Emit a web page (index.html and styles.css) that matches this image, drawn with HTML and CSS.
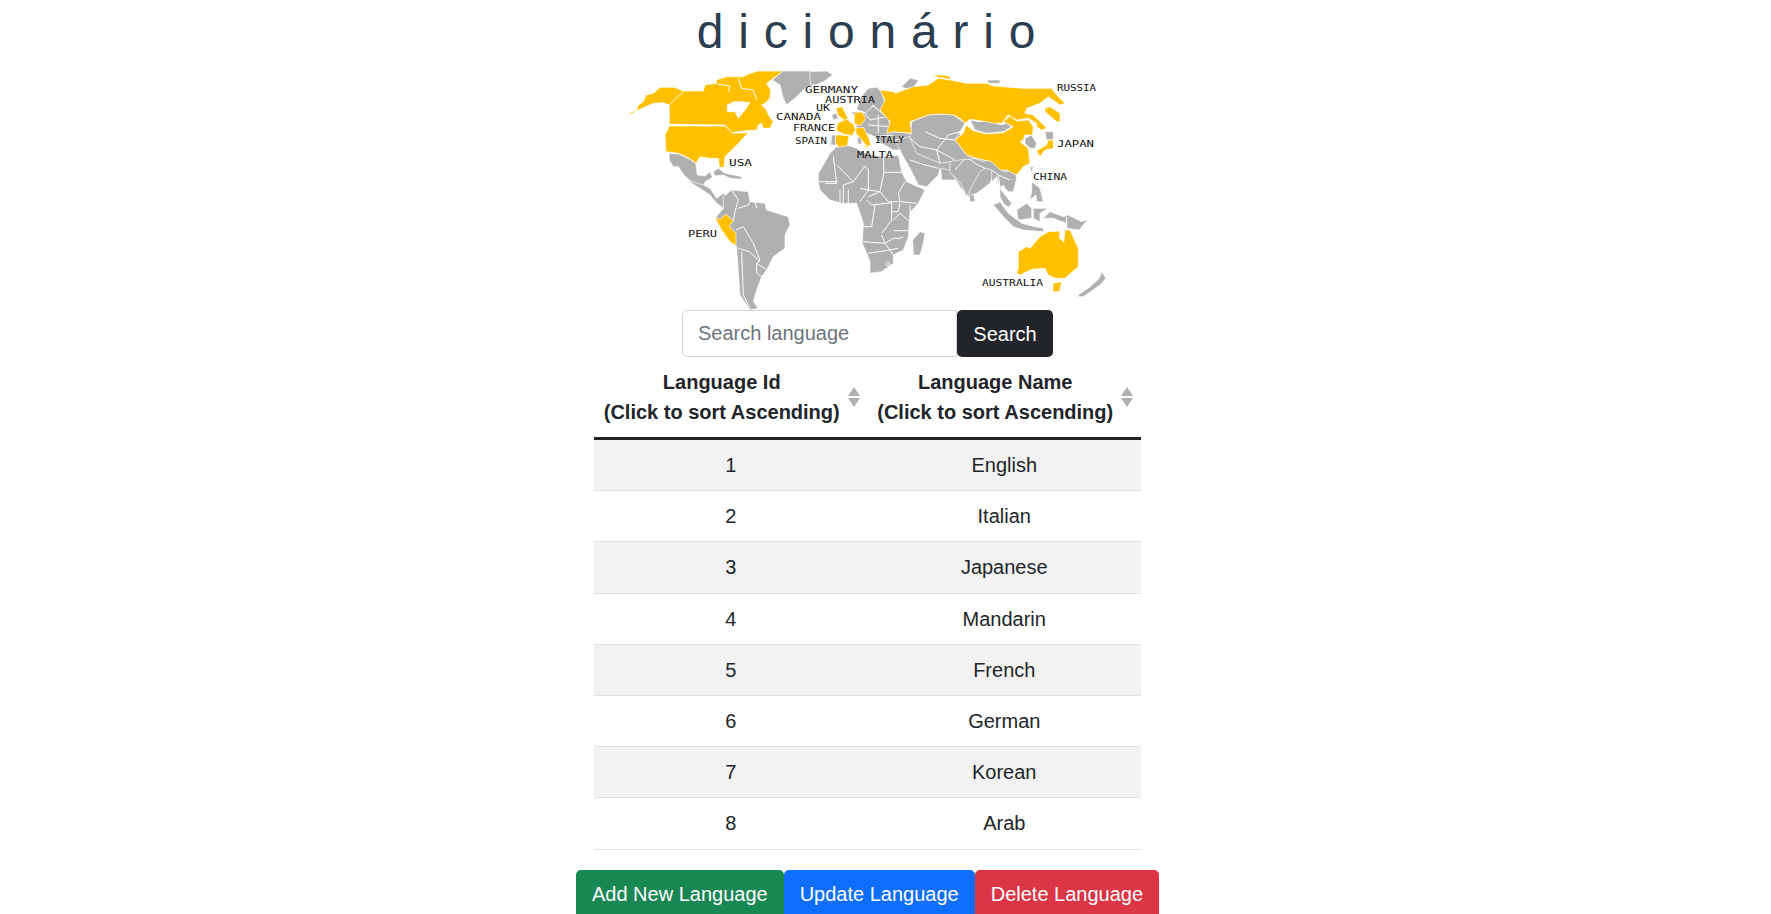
FILE: index.html
```html
<!DOCTYPE html>
<html>
<head>
    <meta charset="utf-8">
    <title>dicionário</title>
    <link rel="stylesheet" href="styles.css">
</head>
<body>
    <div id="container">
        <h1 class="title">dicionário</h1>

        <svg class="map" viewBox="618 60 500 250" width="500" height="250">
            <!-- north america -->
            <g transform="translate(610 60) scale(.3333)">
                <polygon class="land" points="487,60 520,33 640,33 668,42 650,60 620,75 590,80 560,110 530,135 520,115 510,75"/>
                <polygon class="land" points="178,280 205,282 240,298 258,312 262,345 285,348 300,335 308,352 285,365 278,385 290,400 262,378 240,362 222,345 205,320 190,320 178,300"/>
                <polygon class="land" points="310,335 325,325 345,340 395,350 395,358 360,355 340,345 315,348"/>
                <polygon class="hit" points="57,165 60,158 80,150 85,135 100,125 108,105 130,100 150,82 190,82 222,93 178,135 160,128 130,130 85,150"/>
                <path class="hit" fill-rule="evenodd" d="M222,93 L280,93 285,75 320,70 318,60 350,50 400,50 415,42 445,33 520,33 490,55 470,70 482,90 480,115 465,130 455,135 470,150 475,165 490,185 480,205 460,205 455,190 445,195 440,210 410,212 365,218 345,195 178,193 178,135 Z M352,135 L370,125 395,125 420,128 405,150 385,175 375,155 352,155 Z"/>
                <polygon class="hit" points="178,198 345,198 368,220 415,218 385,250 345,290 342,322 328,322 326,295 300,295 270,290 258,310 238,295 205,280 168,275 165,225"/>
                <polyline class="border" points="320,72 360,78 355,95"/>
                <polyline class="border" points="385,55 395,85 430,90 440,120"/>
            </g>
            <!-- south america -->
            <g transform="translate(660 180) scale(.3333)">
                <polygon class="land" points="80,0 130,15 150,25 170,55 190,40 205,55 190,85 170,70 150,45 120,25"/>
                <polygon class="land" points="190,50 215,30 265,35 270,65 315,70 320,90 385,110 390,135 375,165 375,205 340,230 320,270 305,290 290,330 280,365 295,385 270,390 240,345 230,200 185,150 165,115 190,85"/>
                <polygon class="hit" points="165,112 180,118 198,103 220,122 208,138 228,160 228,197 210,185 185,150"/>
                <polyline class="border" points="215,30 235,60 225,95 220,122"/>
                <polyline class="border" points="235,85 265,75 270,65"/>
                <polyline class="border" points="285,65 290,85"/>
                <polyline class="border" points="228,150 250,140 280,190 300,240 290,250 320,270"/>
                <polyline class="border" points="235,205 268,215 300,245"/>
                <polyline class="border" points="245,215 250,345 270,385"/>
                <polyline class="border" points="290,250 290,280 305,290"/>
            </g>
            <!-- africa -->
            <g transform="translate(810 140) scale(.3333)">
                <polygon class="land" points="25,100 40,75 60,40 80,20 110,15 140,25 165,40 220,50 265,45 275,95 290,125 345,150 325,190 302,215 298,245 295,290 280,330 250,345 250,370 215,395 180,400 180,365 170,340 157,310 160,250 145,205 140,190 95,190 60,180 30,150 25,125"/>
                <polygon class="land" points="310,345 308,300 330,275 345,280 340,310 330,345"/>
                <polyline class="border" points="70,50 80,130 45,130"/>
                <polyline class="border" points="25,125 80,125"/>
                <polyline class="border" points="80,75 130,125 165,78 175,90 175,150"/>
                <polyline class="border" points="220,50 222,97 275,97"/>
                <polyline class="border" points="222,97 210,155 175,150"/>
                <polyline class="border" points="210,155 235,185 270,185 265,160 285,125"/>
                <polyline class="border" points="270,185 320,190"/>
                <polyline class="border" points="175,170 210,155"/>
                <polyline class="border" points="170,180 185,195 245,188 245,240 215,280"/>
                <polyline class="border" points="195,195 185,260 160,260"/>
                <polyline class="border" points="245,215 265,215 270,190"/>
                <polyline class="border" points="300,195 300,245 270,220 250,240"/>
                <polyline class="border" points="250,272 295,272"/>
                <polyline class="border" points="215,285 225,310 160,305"/>
                <polyline class="border" points="225,310 250,295 270,295 280,290"/>
                <polyline class="border" points="225,310 240,330 265,325"/>
                <polyline class="border" points="175,340 240,330 250,345"/>
                <polyline class="border" points="130,125 100,135 100,190"/>
                <polyline class="border" points="90,150 90,190"/>
                <polyline class="border" points="115,150 115,190"/>
                <polyline class="border" points="150,145 175,150 150,185"/>
                <circle class="border" cx="233" cy="372" r="5"/>
            </g>
            <!-- europe and asia -->
            <g transform="translate(810 70) scale(.3333)">
                <polygon class="land" points="0,5 50,3 68,15 40,35 15,45 0,40"/>
                <polygon class="land" points="275,50 300,25 325,30 310,55 285,55"/>
                <polygon class="land" points="140,120 150,85 175,55 200,52 215,65 225,100 210,125 190,105 170,130 160,125"/>
                <polygon class="land" points="125,125 140,125 165,130 190,108 210,125 235,145 245,185 300,190 305,170 345,155 400,135 450,160 450,330 395,330 390,270 360,290 310,260 290,255 295,240 250,240 215,220 185,195 165,190 140,175 135,145"/>
                <polygon class="land" points="65,135 80,130 85,145 70,150"/>
                <polygon class="land" points="143,200 155,200 155,222 143,222"/>
                <polygon class="land" points="66,195 78,195 78,225 62,225"/>
                <polyline class="border" points="165,130 180,150 230,140"/>
                <polyline class="border" points="175,165 240,170"/>
                <polyline class="border" points="205,135 205,190"/>
                <polyline class="border" points="190,200 250,195"/>
                <polygon class="hit" points="78,114 97,110 114,146 105,152 84,136"/>
                <polygon class="hit" points="84,158 110,148 132,164 137,180 126,197 100,192 78,181"/>
                <polygon class="hit" points="78,194 117,197 112,227 85,232 76,215"/>
                <polygon class="hit" points="133,128 156,126 167,145 152,167 133,162"/>
                <polygon class="hit" points="138,173 161,173 177,205 183,227 169,227 149,202 138,191"/>
                <polygon class="hit" points="160,228 175,228 170,235"/>
            </g>
            <g transform="translate(860 60) scale(.3333)">
                <polygon class="land" points="150,230 170,220 285,240 320,285 350,295 395,305 420,330 440,330 465,350 445,350 420,340 400,345 390,370 350,400 325,410 300,380 270,330 240,325 235,345 200,380 175,375 150,325 130,290 105,240"/>
            </g>
            <g transform="translate(950 120) scale(.3333)">
                <polygon class="land" points="0,60 15,65 60,110 100,125 125,115 145,145 165,155 195,150 200,175 195,195 190,215 175,215 165,205 160,195 150,205 140,170 125,185 125,150 105,145 90,155 70,190 50,230 35,195 15,170 0,160"/>
                <polygon class="land" points="58,225 72,225 75,245 60,245"/>
                <polygon class="land" points="130,255 150,245 175,280 215,310 255,320 280,325 280,335 220,330 190,320 165,295"/>
                <polygon class="land" points="200,270 230,250 245,265 245,295 205,300"/>
                <polygon class="land" points="250,265 295,265 270,280 270,305 250,295"/>
                <polygon class="land" points="150,205 165,225 185,250 175,262 160,250 150,230"/>
                <polygon class="land" points="240,140 250,140 245,160"/>
                <polygon class="land" points="245,185 270,205 280,245 260,245 258,225 240,240 245,215"/>
                <polygon class="land" points="280,295 300,275 340,290 355,285 395,305 415,298 395,320 390,330 350,325 350,310 310,295"/>
                <polyline class="border" points="350,290 350,325"/>
                <polyline class="border" points="15,150 50,110 75,130 105,145"/>
                <polyline class="border" points="145,165 150,200 165,210"/>
                <polyline class="border" points="125,150 145,165 180,180"/>
            </g>
            <g transform="translate(860 60) scale(.3333)">
                <polygon class="land" points="382,60 420,60 420,70 385,70"/>
                <polygon class="land" points="155,185 205,165 240,162 280,165 315,190 285,240 320,285 350,295 300,300 240,310 170,280 150,235"/>
                <polygon class="land" points="330,180 355,185 395,182 420,195 440,190 455,200 430,215 380,220 345,210"/>
                <polygon class="land" points="495,235 515,225 530,250 525,265 510,265 495,250"/>
                <polygon class="land" points="555,215 580,215 580,238 560,240"/>
                <polyline class="border" points="195,215 240,235 285,240"/>
                <polyline class="border" points="150,235 180,260 230,270 240,310"/>
                <polyline class="border" points="230,270 265,225 300,215"/>
                <polyline class="border" points="230,270 285,300"/>
                <polyline class="border" points="150,300 195,315 235,325"/>
                <polygon class="hit" points="60,90 100,95 105,100 160,80 205,75 235,55 270,60 320,70 380,70 400,78 490,85 575,85 590,105 615,130 600,135 565,110 540,130 500,145 495,160 520,165 560,205 545,210 530,200 530,190 505,175 470,180 445,165 425,190 400,190 380,185 330,178 315,190 300,175 280,165 240,162 205,165 150,185 155,220 100,215 80,220 90,185 60,150 75,120"/>
                <polygon class="hit" points="555,145 570,140 600,160 600,185 590,185 555,155"/>
                <polygon class="hit" points="217,45 250,45 272,50 272,58 235,52"/>
                <polygon class="hit" points="318,195 340,212 380,222 430,218 460,200 430,185 450,168 470,183 505,180 520,200 518,225 495,225 490,240 480,245 505,265 510,310 490,320 470,345 440,330 420,330 395,305 350,295 320,285 285,240 310,220"/>
                <polygon class="hit" points="530,272 560,255 565,240 580,240 580,265 555,270 540,290"/>
            </g>
            <!-- australia -->
            <g transform="translate(900 180) scale(.3333)">
                <polygon class="hit" points="355,215 380,200 390,205 420,170 445,155 480,153 478,175 492,185 495,150 510,150 535,205 535,260 495,295 465,295 445,285 435,265 395,268 360,285 350,280 355,265"/>
                <polygon class="hit" points="460,310 485,305 478,335 458,335"/>
                <polygon class="land" points="535,345 570,320 598,295 605,275 618,295 600,315 550,350 535,350"/>
            </g>
            <text class="map-label" x="805" y="93" textLength="53" lengthAdjust="spacingAndGlyphs">GERMANY</text>
            <text class="map-label" x="825" y="103" textLength="50" lengthAdjust="spacingAndGlyphs">AUSTRIA</text>
            <text class="map-label" x="816" y="111" textLength="14" lengthAdjust="spacingAndGlyphs">UK</text>
            <text class="map-label" x="776" y="120" textLength="45" lengthAdjust="spacingAndGlyphs">CANADA</text>
            <text class="map-label" x="793" y="131" textLength="42" lengthAdjust="spacingAndGlyphs">FRANCE</text>
            <text class="map-label" x="795" y="144" textLength="32" lengthAdjust="spacingAndGlyphs">SPAIN</text>
            <text class="map-label" x="729" y="166" textLength="23" lengthAdjust="spacingAndGlyphs">USA</text>
            <text class="map-label" x="1057" y="91" textLength="39" lengthAdjust="spacingAndGlyphs">RUSSIA</text>
            <text class="map-label" x="875" y="143" textLength="29" lengthAdjust="spacingAndGlyphs">ITALY</text>
            <text class="map-label" x="857" y="158" textLength="36" lengthAdjust="spacingAndGlyphs">MALTA</text>
            <text class="map-label" x="1057" y="147" textLength="37" lengthAdjust="spacingAndGlyphs">JAPAN</text>
            <text class="map-label" x="1033" y="180" textLength="34" lengthAdjust="spacingAndGlyphs">CHINA</text>
            <text class="map-label" x="688" y="237" textLength="29" lengthAdjust="spacingAndGlyphs">PERU</text>
            <text class="map-label" x="982" y="286" textLength="61" lengthAdjust="spacingAndGlyphs">AUSTRALIA</text>
        </svg>

        <form class="search">
            <input type="text" class="search-input" placeholder="Search language">
            <button type="button" class="btn btn-dark">Search</button>
        </form>

        <table class="languages">
            <thead>
                <tr>
                    <th>
                        <div class="head">
                            <span>Language Id<br>(Click to sort Ascending)</span>
                            <span class="sort"><i class="up"></i><i class="down"></i></span>
                        </div>
                    </th>
                    <th>
                        <div class="head">
                            <span>Language Name<br>(Click to sort Ascending)</span>
                            <span class="sort"><i class="up"></i><i class="down"></i></span>
                        </div>
                    </th>
                </tr>
            </thead>
            <tbody>
                <tr><td>1</td><td>English</td></tr>
                <tr><td>2</td><td>Italian</td></tr>
                <tr><td>3</td><td>Japanese</td></tr>
                <tr><td>4</td><td>Mandarin</td></tr>
                <tr><td>5</td><td>French</td></tr>
                <tr><td>6</td><td>German</td></tr>
                <tr><td>7</td><td>Korean</td></tr>
                <tr><td>8</td><td>Arab</td></tr>
            </tbody>
        </table>

        <div class="actions">
            <button type="button" class="btn btn-green">Add New Language</button>
            <button type="button" class="btn btn-blue">Update Language</button>
            <button type="button" class="btn btn-red">Delete Language</button>
        </div>
    </div>
</body>
</html>
```

FILE: styles.css
```css
html, body {
    height: 100%;
    margin: 0;
    overflow: hidden;
}

body {
    background-color: #fff;
    color: #212529;
    font-family: "Liberation Sans", Arial, sans-serif;
    font-size: 20px;
    line-height: 30px;
}

#container {
    display: flex;
    flex-direction: column;
    align-items: center;
    padding-right: 36px;
}

.title {
    margin: 0;
    height: 60px;
    padding-left: 12px;
    color: #2c3e50;
    font-size: 48px;
    font-weight: 400;
    letter-spacing: 14.8px;
    line-height: 64px;
}

.map {
    display: block;
}

.land {
    fill: #b0b0b0;
    stroke: #fff;
    stroke-width: 2;
}

.hit {
    fill: #ffc000;
    stroke: #fff;
    stroke-width: 2;
}

.border {
    fill: none;
    stroke: #fff;
    stroke-width: 3;
}

.map-label {
    fill: #111;
    font-family: "DejaVu Sans Mono", monospace;
    font-size: 8px;
}

.search {
    display: flex;
    margin: 0;
}

.search-input {
    box-sizing: border-box;
    width: 275px;
    height: 47px;
    padding: 8px 15px;
    border: 1px solid #ced4da;
    border-radius: 5px 0 0 5px;
    color: #212529;
    font-family: inherit;
    font-size: 20px;
}

.search-input::placeholder {
    color: #6c757d;
}

.btn {
    box-sizing: border-box;
    height: 48px;
    padding: 8px 15px;
    border: 1px solid transparent;
    border-radius: 5px;
    color: #fff;
    font-family: inherit;
    font-size: 20px;
    line-height: 30px;
}

.search .btn {
    width: 96px;
    height: 47px;
}

.btn-dark {
    background-color: #212529;
}

.btn-green {
    background-color: #198754;
}

.btn-blue {
    background-color: #0d6efd;
}

.btn-red {
    background-color: #dc3545;
}

.languages {
    width: 547px;
    border-collapse: collapse;
    table-layout: fixed;
    text-align: center;
}

.languages th {
    padding: 10px 0;
    border-bottom: 3px solid #212529;
}

.head {
    display: flex;
    justify-content: center;
    align-items: center;
    gap: 8px;
    padding-left: 2px;
}

.sort {
    display: flex;
    flex-direction: column;
    gap: 2px;
}

.sort i {
    display: block;
    width: 0;
    height: 0;
    border-left: 6.5px solid transparent;
    border-right: 6.5px solid transparent;
}

.sort .up {
    border-bottom: 9px solid #b0b0b0;
}

.sort .down {
    border-top: 9px solid #b0b0b0;
}

.languages td {
    height: 30.2px;
    padding: 10px 0;
    border-bottom: 1px solid #dee2e6;
}

.languages tbody tr:nth-child(odd) td {
    background-color: #f2f2f2;
}

.actions {
    display: flex;
    margin-top: 20px;
}
```
